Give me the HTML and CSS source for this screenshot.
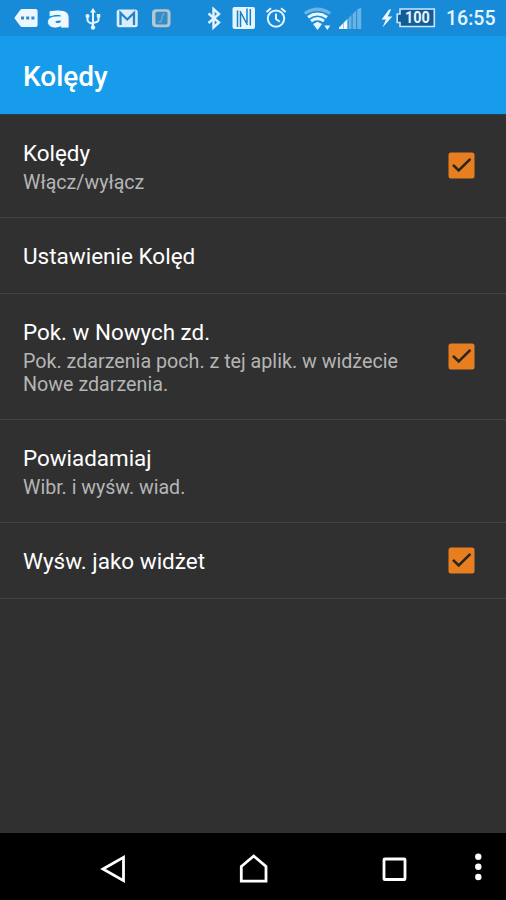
FILE: index.html
```html
<!DOCTYPE html>
<html lang="pl">
<head>
<meta charset="utf-8">
<title>Kolędy</title>
<link rel="stylesheet" href="styles.css">
</head>
<body>
<div class="screen">
  <header class="status">
    <svg width="44" height="36" viewBox="0 0 44 36"><path d="M14.3 18 20 10.2Q20.8 9 22.4 9H35.6Q37.6 9 37.6 11V25Q37.6 27 35.6 27H22.4Q20.8 27 20 25.8Z" fill="#eaf7ff"/><path d="M21 16.5h3v3h-3zM26.2 16.5h3v3h-3zM31.4 16.5h3v3h-3z" fill="#3289c9"/></svg>
    <span class="brand">a</span>
    <svg width="32" height="36" viewBox="78 0 32 36" fill="none" stroke="#e6f5ff" stroke-width="2"><path d="M93 11V28M87.5 16.5V20Q87.5 22.5 93 24M98.5 16V20Q98.5 22 93 23"/><path d="m93 8 3 4.5h-6zM96.8 14h3.5v3.5h-3.5z" fill="#e6f5ff" stroke="none"/><circle cx="87.5" cy="16" r="2" fill="#e6f5ff" stroke="none"/><circle cx="93" cy="27.5" r="2.2" fill="#e6f5ff" stroke="none"/></svg>
    <svg width="34" height="36" viewBox="110 0 34 36"><rect x="116.7" y="9.5" width="21" height="17.8" rx="2.5" fill="#d9edfa"/><path d="M120.5 25V13L127.2 19.5 134 13V25" fill="none" stroke="#2184cc" stroke-width="2.3"/></svg>
    <svg width="48" height="36" viewBox="144 0 48 36"><rect x="152" y="9.2" width="18.5" height="18" rx="4" fill="#b6c6d0"/><rect x="155.5" y="11.7" width="12" height="12.8" rx="1.5" fill="#348bc6"/><path d="M158 22h3l2-8h2" fill="none" stroke="#61a9d9" stroke-width="1.5"/></svg>
    <svg width="34" height="36" viewBox="192 0 34 36"><path d="m208.5 13.5 10.5 9-5.5 5V9l5.5 5-10.5 9" fill="none" stroke="#e3f3ff" stroke-width="2.4"/></svg>
    <svg width="34" height="36" viewBox="226 0 34 36"><rect x="232.5" y="7" width="22.5" height="22" rx="2" fill="#e5f5ff"/><path d="M237.5 27V10.5M240.5 27V13M240 11 247.5 25M247 8.5V23M250.3 25.5V9" fill="none" stroke="#187fc6" stroke-width="1.5"/></svg>
    <svg width="38" height="36" viewBox="260 0 38 36" fill="none" stroke="#e5f5ff" stroke-width="2"><circle cx="276" cy="18.6" r="8.2"/><path d="M276 13.5V19l3.8 2.8M266.5 12l4.5-3.7M281 8.3l4.7 3.7"/></svg>
    <svg width="36" height="36" viewBox="298 0 36 36" fill="none"><path d="M304.8 13.5Q317.5 5 330.2 13.5" stroke="#69b4e9" stroke-width="3.2"/><path d="M308 17.2Q317.5 10.8 327 17.2M311 21Q317.5 16.3 324 21" stroke="#e9f7ff" stroke-width="3"/><path d="m313 24 4.5-2.2 4.5 2.2-4.5 6zM324.3 25.5h6l-3 4.5z" fill="#e9f7ff"/></svg>
    <svg width="38" height="36" viewBox="334 0 38 36"><path d="M339 29v-1.5l4-4V29zM343.4 29v-6l4-4v10z" fill="#f0faff"/><path d="M348.5 29V18l3-3v14zM352.6 29V14l3.6-3.6V29zM357.2 29V9.5l4-2V29z" fill="#69b3e4"/></svg>
    <svg width="66" height="36" viewBox="372 0 66 36"><path d="m389 9.5-7.4 10h4.3l-3.4 8 9.8-11h-4.6l3.5-7z" fill="#eef9ff"/><path d="M400 9H434.3V26.5H400V22.5H397.2V14H400Z" fill="#125c97" stroke="#c9e7fb" stroke-width="1.6"/><text class="level" x="405" y="23.4" textLength="24.8" lengthAdjust="spacingAndGlyphs">100</text></svg>
    <span class="clock">16:55</span>
  </header>
  <h1 class="appbar">Kolędy</h1>
  <main class="list">
    <section class="row two">
      <div class="label"><div class="title">Kolędy</div><div class="sub">Włącz/wyłącz</div></div>
      <svg class="check" width="27" height="27" viewBox="0 0 27 27"><rect x=".5" y=".5" width="26" height="26" rx="2.5"/><path d="m5 12.8 5.7 5.7L22.4 6.8"/></svg>
    </section>
    <section class="row one"><div class="label"><div class="title">Ustawienie Kolęd</div></div></section>
    <section class="row three">
      <div class="label"><div class="title">Pok. w Nowych zd.</div><div class="sub long">Pok. zdarzenia poch. z tej aplik. w widżecie<br>Nowe zdarzenia.</div></div>
      <svg class="check" width="27" height="27" viewBox="0 0 27 27"><rect x=".5" y=".5" width="26" height="26" rx="2.5"/><path d="m5 12.8 5.7 5.7L22.4 6.8"/></svg>
    </section>
    <section class="row two"><div class="label"><div class="title">Powiadamiaj</div><div class="sub">Wibr. i wyśw. wiad.</div></div></section>
    <section class="row one">
      <div class="label"><div class="title">Wyśw. jako widżet</div></div>
      <svg class="check" width="27" height="27" viewBox="0 0 27 27"><rect x=".5" y=".5" width="26" height="26" rx="2.5"/><path d="m5 12.8 5.7 5.7L22.4 6.8"/></svg>
    </section>
  </main>
  <nav class="nav">
    <svg width="506" height="67" viewBox="0 833 506 67" fill="none" stroke="#fff" stroke-width="2.8"><path d="M103 869 123.5 857.3V880.7Z"/><path d="M241.3 866.5 253.7 856 266 866.5V881.2H241.3Z"/><rect x="384" y="859" width="21" height="20.5" rx=".8"/><g fill="#fff" stroke="none"><circle cx="478.3" cy="856.7" r="3.2"/><circle cx="478.3" cy="866.8" r="3.2"/><circle cx="478.3" cy="877" r="3.2"/></g></svg>
  </nav>
</div>
</body>
</html>
```

FILE: styles.css
```css
* { box-sizing: border-box; }
body { margin: 0; background: #303030; font-family: Roboto, "Noto Sans", sans-serif; }
.screen { width: 506px; height: 900px; display: flex; flex-direction: column; overflow: hidden; }
svg { display: block; flex: none; }
.status { display: flex; height: 36px; background: #178bd8; flex: none; }
.brand { width: 34px; padding-left: 3px; font: bold 29px/34px "DejaVu Sans", sans-serif; color: #eef9ff; -webkit-text-stroke: 1px #eef9ff; transform: scaleX(1.2); transform-origin: 3px 0; }
.level { font: bold 16px Roboto, sans-serif; fill: #e8f6ff; }
.clock { margin-left: 8px; font-size: 19.5px; font-weight: 500; line-height: 38px; color: #e5f5ff; }
.appbar { flex: none; height: 79px; margin: 0; padding-left: 23px; background: #169cea; border-bottom: 1px solid #223f50; color: #fff; font-size: 28px; font-weight: 500; line-height: 82px; }
.list { flex: 1; }
.row { display: flex; align-items: center; justify-content: space-between; padding: 0 31px 1px 23px; border-bottom: 1px solid #434343; }
.one { height: 76px; }
.two { height: 103px; }
.three { height: 126px; }
.title { color: #fff; font-size: 22.4px; line-height: 30px; white-space: nowrap; }
.one .title { padding-top: 2px; font-size: 22.5px; }
.sub { color: #b5b5b5; font-size: 19.6px; line-height: 23px; padding-top: 3px; margin-bottom: -1px; white-space: nowrap; }
.long { font-size: 19.7px; }
.check { fill: #e77e20; }
.check path { fill: none; stroke: #29251f; stroke-width: 2.6; }
.nav { flex: none; height: 67px; background: #000; }
```
